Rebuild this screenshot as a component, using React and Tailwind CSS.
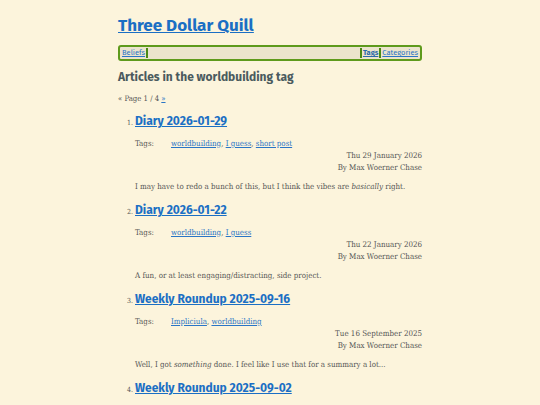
import React from "react";

const items = [
  {
    n: 1,
    title: "Diary 2026-01-29",
    tags: ["worldbuilding", "I guess", "short post"],
    date: "Thu 29 January 2026",
    summary: (
      <>I may have to redo a bunch of this, but I think the vibes are <em>basically</em> right.</>
    ),
  },
  {
    n: 2,
    title: "Diary 2026-01-22",
    tags: ["worldbuilding", "I guess"],
    date: "Thu 22 January 2026",
    summary: <>A fun, or at least engaging/distracting, side project.</>,
  },
  {
    n: 3,
    title: "Weekly Roundup 2025-09-16",
    tags: ["Impliciula", "worldbuilding"],
    date: "Tue 16 September 2025",
    summary: (
      <>Well, I got <em>something</em> done. I feel like I use that for a summary a lot...</>
    ),
  },
  {
    n: 4,
    title: "Weekly Roundup 2025-09-02",
    tags: ["worldbuilding"],
    date: "Tue 2 September 2025",
    summary: <>More.</>,
  },
];

const head = { fontFamily: '"Fira Sans", Lato, "Open Sans", sans-serif' };
const body = { fontFamily: '"Roboto Slab", "DejaVu Serif", serif', fontStretch: "condensed" };

export default function App() {
  return (
    <div className="h-[405px] w-[540px] overflow-hidden bg-[#fcf4dc]">
      <div className="mx-auto w-[304px] pt-[15px]">
        <h1 className="text-[17px] leading-[22px] font-bold text-[#1b6fc4] underline" style={head}>
          <a href="#">Three Dollar Quill</a>
        </h1>
        <nav
          className="mt-[8px] flex h-[16px] items-center rounded-[3px] border-2 border-[#5e9a1c] bg-[#ebe4cd] px-[2px] text-[7.5px] text-[#2a75c6]"
          style={head}
        >
          <a className="underline" href="#">Beliefs</a>
          <span className="ml-[1px] h-[10px] w-[2px] bg-[#4b8a14]" />
          <span className="flex-1" />
          <span className="mr-[1px] h-[10px] w-[2px] bg-[#4b8a14]" />
          <a className="font-bold underline text-[#2a6aaa]" href="#">Tags</a>
          <span className="mx-[1px] h-[10px] w-[2px] bg-[#4b8a14]" />
          <a className="underline" href="#">Categories</a>
        </nav>
        <h2 className="mt-[8px] text-[12px] leading-[16px] font-bold text-[#4a5a5e]" style={head}>
          Articles in the worldbuilding tag
        </h2>
        <p className="mt-[8px] text-[7.7px] leading-[12px] text-[#555]" style={body}>
          « Page 1 / 4 <a className="text-[#2a75c6] underline" href="#">»</a>
        </p>
        <ol className="mt-[8px]">
          {items.map((it) => (
            <li key={it.n} className="flex h-[89px] flex-col pl-[17px]">
              <div className="flex items-baseline">
                <span className="-ml-[8px] w-[8px] text-[7px] text-[#555]" style={body}>{it.n}.</span>
                <a
                  className="text-[12px] leading-[16px] font-bold text-[#1b6fc4] underline"
                  style={head}
                  href="#"
                >
                  {it.title}
                </a>
              </div>
              <div className="mt-[9px] flex text-[7.9px] leading-[12px] text-[#555]" style={body}>
                <span className="w-[36px]">Tags:</span>
                <span>
                  {it.tags.map((t, i) => (
                    <React.Fragment key={t}>
                      <a className="text-[#2a75c6] underline" href="#">{t}</a>
                      {i < it.tags.length - 1 ? ", " : ""}
                    </React.Fragment>
                  ))}
                </span>
              </div>
              <div className="text-right text-[7.9px] leading-[12px] text-[#555]" style={body}>
                <div>{it.date}</div>
                <div>By Max Woerner Chase</div>
              </div>
              <p className="mt-[7px] text-[7.9px] leading-[12px] text-[#555]" style={body}>
                {it.summary}
              </p>
            </li>
          ))}
        </ol>
      </div>
    </div>
  );
}
